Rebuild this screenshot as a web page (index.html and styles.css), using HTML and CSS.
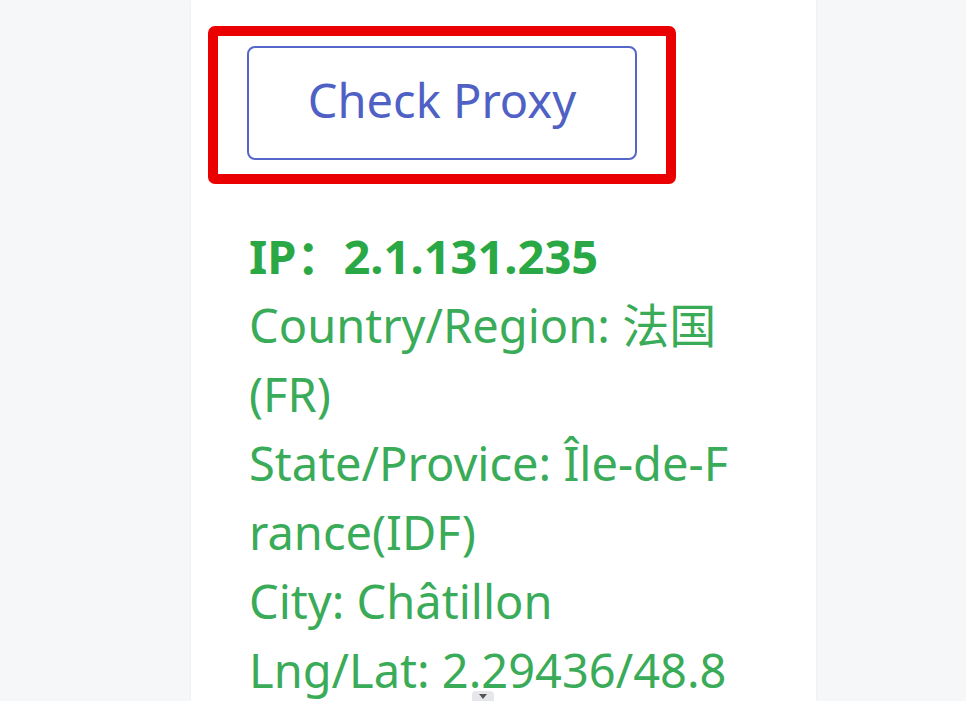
FILE: index.html
```html
<!DOCTYPE html>
<html lang="en">
<head>
  <meta charset="UTF-8">
  <meta name="viewport" content="width=device-width, initial-scale=1.0">
  <title>Check Proxy</title>
  <link rel="stylesheet" href="styles.css">
</head>
<body>
  <div class="panel">
    <div class="highlight">
      <button class="check-btn">Check Proxy</button>
    </div>
    <div class="info">
      <div class="ip">IP：2.1.131.235</div>
      <div class="row">Country/Region: 法国(FR)</div>
      <div class="row">State/Provice: Île-de-France(IDF)</div>
      <div class="row">City: Châtillon</div>
      <div class="row">Lng/Lat: 2.29436/48.8</div>
    </div>
    <div class="scroll-tab"><span class="arrow"></span></div>
  </div>
</body>
</html>
```

FILE: styles.css
```css
html, body {
  margin: 0;
  height: 100%;
  overflow: hidden;
}
body {
  background: #f6f7f9;
  font-family: "Noto Sans", "Noto Sans CJK SC", sans-serif;
}
.panel {
  position: relative;
  margin-left: 191px;
  width: 625px;
  height: 100%;
  background: #fff;
  box-shadow: 0 0 3px rgba(0, 0, 0, 0.06);
  padding: 26px 0 0 17px;
  box-sizing: border-box;
}
.highlight {
  display: inline-block;
  border: 10px solid #ea0000;
  border-radius: 7px;
  padding: 10px 29px 14px 29px;
}
.check-btn {
  display: block;
  width: 390px;
  height: 114px;
  background: #fff;
  border: 2px solid #5567c8;
  border-radius: 8px;
  color: #4f61c4;
  font-family: "Noto Sans", sans-serif;
  font-size: 47px;
  padding: 0 0 6px;
}
.info {
  width: 490px;
  margin: 38px 0 0 41px;
  color: #3aab58;
  font-size: 47px;
  line-height: 69px;
  word-break: break-all;
}
.ip {
  font-weight: bold;
  color: #2aa845;
}
.scroll-tab {
  position: absolute;
  left: 281px;
  bottom: 0;
  width: 22px;
  height: 10px;
  background: #e6e7ea;
  border-radius: 4px 4px 0 0;
  display: flex;
  justify-content: center;
  padding-top: 3px;
  box-sizing: border-box;
}
.arrow {
  width: 0;
  height: 0;
  border-left: 4px solid transparent;
  border-right: 4px solid transparent;
  border-top: 5px solid #555;
}
```
